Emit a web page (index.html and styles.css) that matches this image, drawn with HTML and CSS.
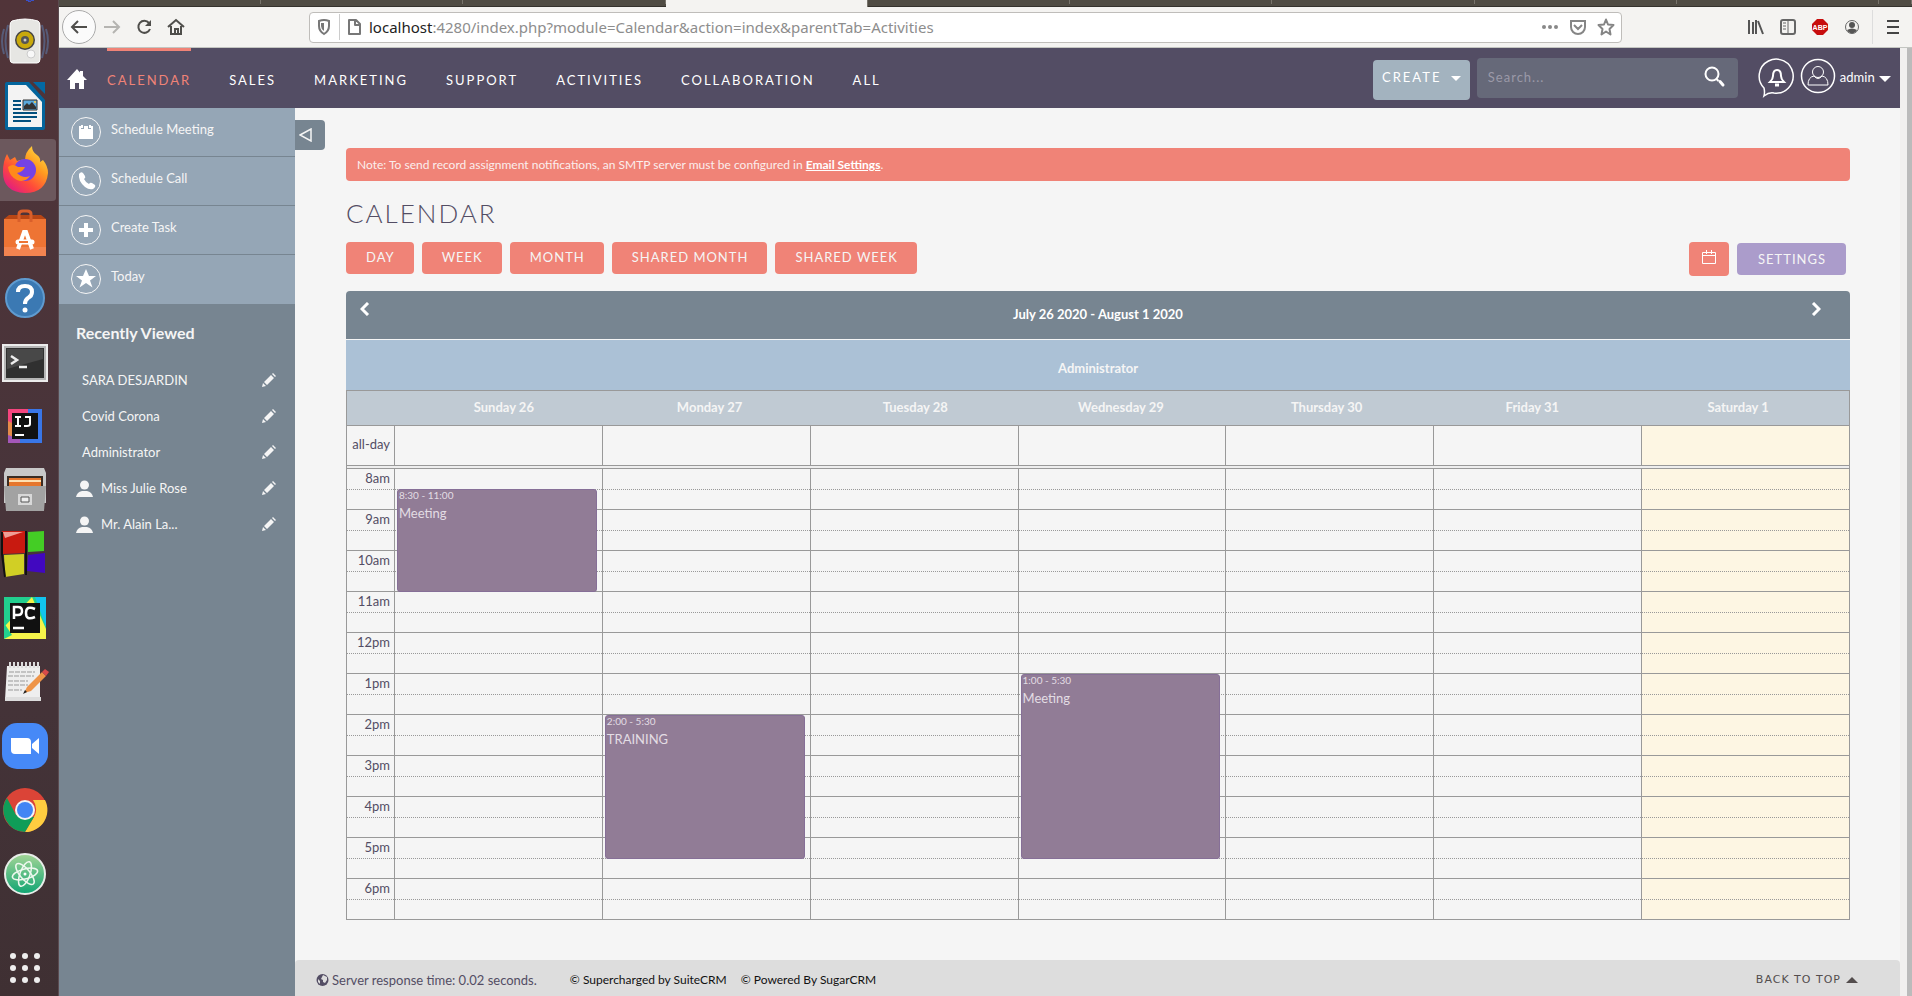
FILE: index.html
```html
<!DOCTYPE html>
<html lang="en">
<head>
<meta charset="utf-8">
<title>Calendar</title>
<link rel="stylesheet" href="styles.css">
</head>
<body>
<div class="desktop">
  <nav class="dock" aria-label="Launcher">
    <svg class="dock-peek" width="8" height="2" viewBox="0 0 8 2"><path d="M0 0h3l1 1 1-1h3v1H5v1H2V1H0z" fill="#3a50c8"/></svg>
    <button class="dock-item" aria-label="Sound"><svg width="50" height="50" viewBox="0 0 50 50"><g fill="none" stroke="#5a6c93" stroke-width="2" opacity=".7"><path d="M8 8q-5 16 0 33M4 12q-4 12 0 25M42 8q5 16 0 33M46 12q4 12 0 25"/></g><path d="M12 4q13-4 26 0 2 1 2 5v33q0 4-3 4H13q-3 0-3-4V9q0-4 2-5z" fill="#e6e6e3" stroke="#fff"/><circle cx="25" cy="23" r="10" fill="#444"/><circle cx="25" cy="23" r="8.500" fill="#c9a90c"/><circle cx="25" cy="23" r="4" fill="#555"/><circle cx="25" cy="23" r="1.500" fill="#ccc"/><circle cx="31" cy="37" r="4" fill="#f8f8f8" stroke="#ccc"/></svg></button>
    <button class="dock-item" aria-label="Writer"><svg width="50" height="50" viewBox="0 0 50 50"><path d="M7 1h22l16 18v28q0 2-2 2H7q-2 0-2-2V3q0-2 2-2z" fill="#03659d"/><path d="M33 1h12v12z" fill="#0369a3"/><path d="M8 4h18l16 17v25H8z" fill="#f3f3f3"/><g stroke="#03507e" stroke-width="2"><path d="M13 20h8M13 24h8M13 28h8M13 32h24M13 36h24M13 40h18"/></g><path d="M23 19h14v10H23z" fill="#5aa9dc" stroke="#333"/><path d="M24 28v-3l3-3 2 2 3-3 4 5v2z" fill="#333"/><circle cx="35" cy="21" r="1" fill="#fc4"/></svg></button>
    <button class="dock-item is-active" aria-label="Firefox"><svg width="50" height="50" viewBox="0 0 50 50"><defs><linearGradient id="fx" x1="1" y1="0" x2=".2" y2="1"><stop offset="0" stop-color="#fff44f"/><stop offset=".4" stop-color="#ff9a1f"/><stop offset=".7" stop-color="#ff4a3a"/><stop offset="1" stop-color="#e01a86"/></linearGradient></defs><path d="M7 9l3 6 5-3 2 4q5-2 8-1 0-8 7-14 0 6 5 9 4 3 3 7l3-2q5 6 5 13Q46 48 25 48 3 47 3 27q0-11 4-18z" fill="url(#fx)"/><circle cx="25" cy="25" r="11" fill="#7542e5"/><path d="M8 22q5-4 10 0l7 0q-2 5-8 6 6 6 13 3-5 7-13 4-8-4-9-13z" fill="#ff8a1a"/></svg></button>
    <button class="dock-item" aria-label="Software"><svg width="50" height="50" viewBox="0 0 50 50"><path d="M4 10h42v37H4z" fill="#ee7434"/><path d="M4 10l5-4h32l5 4z" fill="#b94615"/><path d="M4 38h42v9H4z" fill="#f38450"/><path d="M19 13V5q0-3 4-3h4q4 0 4 3v8" fill="none" stroke="#d95f2b" stroke-width="3"/><path d="M18 40l6-17h2l6 17" fill="none" stroke="#fff" stroke-width="4"/><path d="M18 33h14" stroke="#fff" stroke-width="5" stroke-linecap="round"/><path d="M19 33h9" stroke="#ee7434" stroke-width="2"/></svg></button>
    <button class="dock-item" aria-label="Help"><svg width="50" height="50" viewBox="0 0 50 50"><circle cx="25" cy="25" r="19" fill="#3b79b3" stroke="#5f9bd0" stroke-width="2"/><path d="M18 19q0-6 7-6t7 6q0 4-4 6-3 2-3 6" fill="none" stroke="#fff" stroke-width="4"/><circle cx="25" cy="37" r="2.500" fill="#fff"/></svg></button>
    <button class="dock-item" aria-label="Terminal"><svg width="50" height="50" viewBox="0 0 50 50"><path d="M3 8h44v36H3z" fill="#b5b5b5" stroke="#ececec" stroke-width="2"/><path d="M6 11h38v30H6z" fill="#303030"/><path d="M7 12h36v10L7 32z" fill="#484848"/><path d="M11 19l6 4-6 4M19 30h8" fill="none" stroke="#eee" stroke-width="2.500"/></svg></button>
    <button class="dock-item" aria-label="IntelliJ IDEA"><svg width="50" height="50" viewBox="0 0 50 50"><path d="M8 8h34v34H8z" fill="#3976e8"/><path d="M8 8h20v24H8z" fill="#f4457e"/><path d="M8 20l8 4v18H8z" fill="#e58a4a"/><path d="M8 34l12 4v4H8z" fill="#a457b8"/><path d="M12 12h26v26H12z" fill="#111"/><path d="M15 16h6M18 16v9M15 25h6M25 16h5v7q0 2-3 2h-3M15 34h9" fill="none" stroke="#fff" stroke-width="2"/></svg></button>
    <button class="dock-item" aria-label="Files"><svg width="50" height="50" viewBox="0 0 50 50"><path d="M6 3h38l2 5v30H4V8z" fill="#c8c8c8"/><path d="M7 11h36v10H7z" fill="#3a2c23"/><path d="M9 13h32v8H9z" fill="#e6762c"/><path d="M9 16h32" stroke="#ffe0b0" stroke-width="2"/><path d="M4 21h42l-2 25H6z" fill="#a2a2a2"/><path d="M18 29h14v11H18z" fill="#d8d8d8"/><path d="M21 32h8v5h-8z" fill="#eee" stroke="#555"/></svg></button>
    <button class="dock-item" aria-label="Cubes"><svg width="50" height="50" viewBox="0 0 50 50"><path d="M2 2h23v22l-22 1z" fill="#c81a10"/><path d="M3 3h20L5 9z" fill="#ef9d95"/><path d="M28 3l16-1v20l-16 1z" fill="#44cd25"/><path d="M4 26l20-1v20L5 48z" fill="#d1cf25"/><path d="M28 26l17-2v20l-18-2z" fill="#4108c0"/><path d="M2 3v22l3 23M26 2v44" fill="none" stroke="#111" stroke-width="2"/></svg></button>
    <button class="dock-item" aria-label="PyCharm"><svg width="50" height="50" viewBox="0 0 50 50"><path d="M4 4h42v42H4z" fill="#22cf8f"/><path d="M35 4h11v30z" fill="#12c4ee"/><path d="M4 46V34L32 4l14 32v10z" fill="#f5f34a"/><path d="M4 46V30l8 12z" fill="#22cf8f"/><path d="M10 10h30v30H10z" fill="#111"/><path d="M14 26V14h4q4 0 4 4t-4 4h-4M35 16q-9-4-9 4t9 4M13 35h11" fill="none" stroke="#fff" stroke-width="2.500"/></svg></button>
    <button class="dock-item" aria-label="Notes"><svg width="50" height="50" viewBox="0 0 50 50"><path d="M7 9h33v32l1 2H5z" fill="#eee"/><path d="M5 40h36v4H5z" fill="#ddd"/><path d="M9 15h26M8 19h26M8 24h20M8 28h20M8 33h14" stroke="#999" stroke-dasharray="5 1"/><path d="M9 8h30" stroke="#ddd" stroke-width="6" stroke-dasharray="2 2"/><path d="M24 36l3-6 15-15 4 4-15 15z" fill="#ee9448"/><path d="M42 15l3-3 4 3-3 4z" fill="#d94a4a"/><path d="M23 37l2-4 2 2z" fill="#222"/></svg></button>
    <button class="dock-item" aria-label="Zoom"><svg width="50" height="50" viewBox="0 0 50 50"><rect x="2" y="2" width="46" height="46" rx="15" fill="#4689f7"/><path d="M11 17h16q4 0 4 4v12H15q-4 0-4-4zM32 23l7-6v16l-7-6z" fill="#fff"/></svg></button>
    <button class="dock-item" aria-label="Chrome"><svg width="50" height="50" viewBox="0 0 50 50"><circle cx="25" cy="25" r="22" fill="#db4437"/><path d="M45 15a22 22 0 0 1-20 32l10-17q3-8-2-15z" fill="#ffcd40"/><path d="M7 13a22 22 0 0 0 18 34l9-15-18-2z" fill="#0f9d58"/><circle cx="25" cy="25" r="10" fill="#f4f4f4"/><circle cx="25" cy="25" r="8" fill="#4285f4"/></svg></button>
    <button class="dock-item" aria-label="Atom"><svg width="50" height="50" viewBox="0 0 50 50"><defs><linearGradient id="at" x1="0" y1="0" x2="0" y2="1"><stop offset="0" stop-color="#a3d596"/><stop offset="1" stop-color="#10a573"/></linearGradient></defs><circle cx="25" cy="25" r="20" fill="url(#at)" stroke="#e8ede9" stroke-width="2"/><g fill="none" stroke="#eef8ef" stroke-width="1.500"><ellipse cx="25" cy="25" rx="13" ry="5" transform="rotate(-15 25 25)"/><ellipse cx="25" cy="25" rx="13" ry="5" transform="rotate(50 25 25)"/><ellipse cx="25" cy="25" rx="13" ry="5" transform="rotate(110 25 25)"/></g><circle cx="25" cy="25" r="1.500" fill="#fff"/></svg></button>
    <button class="dock-item dock-apps" aria-label="Show applications"><svg width="50" height="50" viewBox="0 0 50 50" fill="#eee"><circle cx="13" cy="13" r="3"/><circle cx="25" cy="13" r="3"/><circle cx="37" cy="13" r="3"/><circle cx="13" cy="25" r="3"/><circle cx="25" cy="25" r="3"/><circle cx="37" cy="25" r="3"/><circle cx="13" cy="37" r="3"/><circle cx="25" cy="37" r="3"/><circle cx="37" cy="37" r="3"/></svg></button>
  </nav>

  <div class="browser">
    <div class="tabs"><i></i><i></i><i></i><i class="tab-active"></i><i></i><i></i><i></i><i></i><i></i><i></i></div>
    <div class="toolbar">
      <button class="tool-back" aria-label="Back"><svg width="18" height="18" viewBox="0 0 18 18" fill="none" stroke="#4f4e4b" stroke-width="2"><path d="M17 9H2M8 3L2 9l6 6"/></svg></button>
      <button class="tool" aria-label="Forward"><svg width="18" height="18" viewBox="0 0 18 18" fill="none" stroke="#b5b4b1" stroke-width="2"><path d="M1 9h15M10 3l6 6-6 6"/></svg></button>
      <button class="tool" aria-label="Reload"><svg width="18" height="18" viewBox="0 0 18 18"><path d="M14 5a6 6 0 1 0 1 6" fill="none" stroke="#4f4e4b" stroke-width="2"/><path d="M16 2v6h-6z" fill="#4f4e4b"/></svg></button>
      <button class="tool" aria-label="Home"><svg width="18" height="18" viewBox="0 0 18 18" fill="none" stroke="#4f4e4b" stroke-width="2"><path d="M1 9l8-7 8 7M4 8v8h10V8"/><path d="M8 16v-5h3v5"/></svg></button>
      <div class="url">
        <svg width="16" height="18" viewBox="0 0 16 18"><path d="M3 3q5-2 10 0v5q0 5-5 8-5-3-5-8z" fill="none" stroke="#777" stroke-width="2"/><path d="M8 5v8q-3-2-3-5V5z" fill="#777"/></svg>
        <span class="url-line"></span>
        <svg width="14" height="18" viewBox="0 0 14 18"><path d="M2 2h7l4 4v10H2zM8 2v5h5" fill="none" stroke="#777" stroke-width="2" stroke-linejoin="round"/></svg>
        <span class="url-text"><b>localhost</b>:4280/index.php?module=Calendar&amp;action=index&amp;parentTab=Activities</span>
        <span class="url-icons">
          <svg width="18" height="18" viewBox="0 0 18 18" fill="#888"><circle cx="3" cy="9" r="2"/><circle cx="9" cy="9" r="2"/><circle cx="15" cy="9" r="2"/></svg>
          <svg width="18" height="18" viewBox="0 0 18 18" fill="none" stroke="#858585" stroke-width="2"><path d="M2 3h14v6a7 7 0 0 1-14 0zM5 7l4 4 4-4"/></svg>
          <svg width="18" height="18" viewBox="0 0 18 18" fill="none" stroke="#858585" stroke-width="2"><path d="M9 1.500l2 5 5.500.5-4 4 1 5.500L9 13.500 4.500 16.500l1-5.500-4-4L7 6.500z" stroke-linejoin="round"/></svg>
        </span>
      </div>
      <div class="tools-right">
        <svg width="16" height="18" viewBox="0 0 16 18" stroke="#555" stroke-width="2"><path d="M1 2v14M5 4v12M8 2v14M10 3l5 13"/></svg>
        <svg width="16" height="18" viewBox="0 0 16 18" fill="none" stroke="#666"><rect x="1" y="2" width="14" height="14" rx="2" stroke-width="2"/><path d="M8 2v14M3 5h3M3 8h3M3 11h3"/></svg>
        <svg width="16" height="18" viewBox="0 0 16 18"><path d="M5 1h6l5 5v6l-5 5H5l-5-5V6z" fill="#c70d0d"/><text x="8" y="12" class="abp">ABP</text></svg>
        <svg width="16" height="18" viewBox="0 0 16 18"><circle cx="8" cy="9" r="6.500" fill="none" stroke="#666"/><circle cx="8" cy="7" r="3" fill="#555"/><path d="M3 12q5-3 10 0-2 4-5 3-3 1-5-3z" fill="#555"/></svg>
        <span class="tool-line"></span>
        <svg width="14" height="18" viewBox="0 0 14 18" stroke="#444" stroke-width="2"><path d="M1 3h12M1 9h12M1 15h12"/></svg>
      </div>
    </div>

    <div class="viewport">
      <div class="page">
        <header class="topbar">
          <a class="home" href="#" aria-label="Home"><svg width="20" height="20" viewBox="0 0 20 20" fill="#fff"><path d="M10 0l3 3.500V2h3v5l4 4h-3v9h-5v-6H8v6H3v-9H0z"/></svg></a>
          <nav class="menu"><a class="current" href="#">CALENDAR</a><a href="#">SALES</a><a href="#">MARKETING</a><a href="#">SUPPORT</a><a href="#">ACTIVITIES</a><a href="#">COLLABORATION</a><a href="#">ALL</a></nav>
          <button class="create">CREATE <span class="caret"></span></button>
          <form class="search"><input type="text" placeholder="Search..." aria-label="Search"><button type="button" aria-label="Run search"><svg width="22" height="22" viewBox="0 0 22 22" fill="none" stroke="#fff"><circle cx="8" cy="8" r="6.500" stroke-width="2"/><path d="M12.500 13l2 2" stroke-width="2"/><path d="M16 15.500l3 3.500" stroke-width="3" stroke-linecap="round"/></svg></button></form>
          <button class="round" aria-label="Alerts"><svg width="38" height="42" viewBox="0 0 38 42" fill="none" stroke="#fff" stroke-width="2"><path d="M6 31a17 17 0 1 1 10 5q-5-1-10 3 1-4 0-8z" stroke-width="1.500"/><path d="M12 25q3-3 3-6 0-6 4-6t4 6q0 3 3 6z"/><path d="M17 28h4" stroke-width="3"/></svg></button>
          <button class="round" aria-label="Profile"><svg width="36" height="42" viewBox="0 0 36 42" fill="none" stroke="#fff"><circle cx="18" cy="19" r="16.500" stroke-width="1.500"/><circle cx="18" cy="15" r="5.500"/><path d="M8 28q0-8 6-9 4 5 8 0 6 1 6 9z"/></svg></button>
          <button class="user">admin <span class="caret caret-big"></span></button>
        </header>

        <div class="body">
          <aside class="sidebar">
            <ul class="actions">
              <li><a href="#"><svg width="30" height="30" viewBox="0 0 30 30"><circle cx="15" cy="15" r="14.500" fill="none" stroke="#f5f5f5"/><path d="M8 9h2v3h3V9h4v3h3V9h2v13H8z" fill="#fff"/><path d="M10 8h2v3h-2zM18 8h2v3h-2z" fill="#fff"/></svg><span>Schedule Meeting</span></a></li>
              <li><a href="#"><svg width="30" height="30" viewBox="0 0 30 30"><circle cx="15" cy="15" r="14.500" fill="none" stroke="#f5f5f5"/><path d="M8 8q2-3 4-1l2 3q1 2-1 3 2 4 5 5 1-2 3-1l3 2q1 2-2 4-4 1-8-2-7-6-6-13z" fill="#fff"/></svg><span>Schedule Call</span></a></li>
              <li><a href="#"><svg width="30" height="30" viewBox="0 0 30 30"><circle cx="15" cy="15" r="14.500" fill="none" stroke="#f5f5f5"/><path d="M15 8v14M8 15h14" stroke="#fff" stroke-width="4"/></svg><span>Create Task</span></a></li>
              <li><a href="#"><svg width="30" height="30" viewBox="0 0 30 30"><circle cx="15" cy="15" r="14.500" fill="none" stroke="#f5f5f5"/><path d="M15 5l3 7h7l-6 4.500 2.500 7L15 19l-6.500 4.500 2.500-7L5 12h7z" fill="#fff"/></svg><span>Today</span></a></li>
            </ul>
            <h2>Recently Viewed</h2>
            <ul class="recent">
              <li><a href="#">SARA DESJARDIN</a><button aria-label="Edit"><svg width="14" height="14" viewBox="0 0 14 14" fill="#f5f5f5"><path d="M0 14l1-4 3 3zM2 9l7-7 3 3-7 7zM10 1l1-1 3 3-1 1z"/></svg></button></li>
              <li><a href="#">Covid Corona</a><button aria-label="Edit"><svg width="14" height="14" viewBox="0 0 14 14" fill="#f5f5f5"><path d="M0 14l1-4 3 3zM2 9l7-7 3 3-7 7zM10 1l1-1 3 3-1 1z"/></svg></button></li>
              <li><a href="#">Administrator</a><button aria-label="Edit"><svg width="14" height="14" viewBox="0 0 14 14" fill="#f5f5f5"><path d="M0 14l1-4 3 3zM2 9l7-7 3 3-7 7zM10 1l1-1 3 3-1 1z"/></svg></button></li>
              <li class="person"><svg width="17" height="17" viewBox="0 0 17 17" fill="#f5f5f5"><circle cx="8.500" cy="5" r="4.500"/><path d="M0 17q1-5 6-6h5q5 1 6 6z"/></svg><a href="#">Miss Julie Rose</a><button aria-label="Edit"><svg width="14" height="14" viewBox="0 0 14 14" fill="#f5f5f5"><path d="M0 14l1-4 3 3zM2 9l7-7 3 3-7 7zM10 1l1-1 3 3-1 1z"/></svg></button></li>
              <li class="person"><svg width="17" height="17" viewBox="0 0 17 17" fill="#f5f5f5"><circle cx="8.500" cy="5" r="4.500"/><path d="M0 17q1-5 6-6h5q5 1 6 6z"/></svg><a href="#">Mr. Alain La...</a><button aria-label="Edit"><svg width="14" height="14" viewBox="0 0 14 14" fill="#f5f5f5"><path d="M0 14l1-4 3 3zM2 9l7-7 3 3-7 7zM10 1l1-1 3 3-1 1z"/></svg></button></li>
            </ul>
          </aside>

          <div class="main">
            <button class="collapse" aria-label="Collapse sidebar"><svg width="14" height="14" viewBox="0 0 14 14" fill="none" stroke="#f5f5f5" stroke-width="1.500"><path d="M1 7l11-6v12z"/></svg></button>
            <main class="content">
              <p class="alert">Note: To send record assignment notifications, an SMTP server must be configured in <a href="#">Email Settings</a>.</p>
              <h1>CALENDAR</h1>
              <div class="controls">
                <button>DAY</button><button>WEEK</button><button>MONTH</button><button>SHARED MONTH</button><button>SHARED WEEK</button>
                <button class="pick" aria-label="Pick date"><svg width="16" height="16" viewBox="0 0 16 16" fill="none" stroke="#fff"><path d="M1.500 3.500h13v11h-13zM1.500 6.500h13M5.500 1v4M10.500 1v4"/></svg></button>
                <button class="settings">SETTINGS</button>
              </div>
              <section class="calendar">
                <div class="cal-nav">
                  <button class="prev" aria-label="Previous week"><svg width="10" height="14" viewBox="0 0 10 14" fill="none" stroke="#fff" stroke-width="3"><path d="M8 1L2 7l6 6"/></svg></button>
                  <span>July 26 2020 - August 1 2020</span>
                  <button class="next" aria-label="Next week"><svg width="10" height="14" viewBox="0 0 10 14" fill="none" stroke="#fff" stroke-width="3"><path d="M2 1l6 6-6 6"/></svg></button>
                </div>
                <div class="cal-user">Administrator</div>
                <table class="days">
                  <colgroup><col class="col-lead"><col><col><col><col><col><col><col><col class="col-trail"></colgroup>
                  <tr><td></td><th>Sunday 26</th><th>Monday 27</th><th>Tuesday 28</th><th>Wednesday 29</th><th>Thursday 30</th><th>Friday 31</th><th>Saturday 1</th><td></td></tr>
                </table>
                <table class="grid allday">
                  <colgroup><col class="col-axis"><col><col><col><col><col><col><col></colgroup>
                  <tr><th>all-day</th><td></td><td></td><td></td><td></td><td></td><td></td><td></td></tr>
                </table>
                <div class="split"></div>
                <table class="grid hours">
                  <colgroup><col class="col-axis"><col><col><col><col><col><col><col></colgroup>
                  <tr><th>8am</th><td><div class="event from-half" style="--halves:5"><small>8:30 - 11:00</small>Meeting</div></td><td></td><td></td><td></td><td></td><td></td><td></td></tr>
                  <tr><th>9am</th><td></td><td></td><td></td><td></td><td></td><td></td><td></td></tr>
                  <tr><th>10am</th><td></td><td></td><td></td><td></td><td></td><td></td><td></td></tr>
                  <tr><th>11am</th><td></td><td></td><td></td><td></td><td></td><td></td><td></td></tr>
                  <tr><th>12pm</th><td></td><td></td><td></td><td></td><td></td><td></td><td></td></tr>
                  <tr><th>1pm</th><td></td><td></td><td></td><td><div class="event" style="--halves:9"><small>1:00 - 5:30</small>Meeting</div></td><td></td><td></td><td></td></tr>
                  <tr><th>2pm</th><td></td><td><div class="event" style="--halves:7"><small>2:00 - 5:30</small>TRAINING</div></td><td></td><td></td><td></td><td></td><td></td></tr>
                  <tr><th>3pm</th><td></td><td></td><td></td><td></td><td></td><td></td><td></td></tr>
                  <tr><th>4pm</th><td></td><td></td><td></td><td></td><td></td><td></td><td></td></tr>
                  <tr><th>5pm</th><td></td><td></td><td></td><td></td><td></td><td></td><td></td></tr>
                  <tr><th>6pm</th><td></td><td></td><td></td><td></td><td></td><td></td><td></td></tr>
                </table>
              </section>
            </main>
            <footer class="footer">
              <svg width="13" height="14" viewBox="0 0 13 14"><circle cx="6.500" cy="7" r="6" fill="#534d64"/><path d="M7 2l4 2v3l-2 3-2-1V7L5 6zM2 6l2 2v3L2 9z" fill="#ddd"/></svg>
              <span class="timing">Server response time: 0.02 seconds.</span>
              <a href="#">© Supercharged by SuiteCRM</a>
              <a href="#">© Powered By SugarCRM</a>
              <a class="to-top" href="#">BACK TO TOP <svg width="12" height="6" viewBox="0 0 12 6"><path d="M0 6l6-6 6 6z" fill="#534d4d"/></svg></a>
            </footer>
          </div>
        </div>
      </div>
      <div class="scroll"></div>
    </div>
  </div>
</div>
</body>
</html>
```
FILE: styles.css
```css
* { box-sizing: border-box; }
body {
  margin: 0;
  background: #f5f5f5;
  color: #534d64;
  font: 13px/20px Lato, sans-serif;
}
button, input { font: inherit; color: inherit; letter-spacing: inherit; border: 0; padding: 0; background: none; }
a { color: inherit; text-decoration: none; }
ul { list-style: none; margin: 0; padding: 0; }
svg { display: block; flex: none; }

.desktop { display: flex; min-height: 100vh; }

/* Launcher */
.dock {
  flex: none;
  width: 59px;
  display: flex;
  flex-direction: column;
  background: linear-gradient(#513439, #46343a 60%, #3f3033);
  border-right: 1px solid #5b4b50;
}
.dock-peek { margin-left: 26px; margin-bottom: 8px; }
.dock-item {
  height: 64px;
  width: 56px;
  display: flex;
  align-items: center;
  border-radius: 0 4px 4px 0;
}
.dock-item.is-active { background: #6c585d; background-clip: content-box; padding: 1px 0; }
.dock-apps { margin-top: auto; margin-bottom: -3px; }

/* Browser frame */
.browser { flex: 1; min-width: 0; display: flex; flex-direction: column; }
.tabs {
  height: 7px;
  display: grid;
  grid-template-columns: repeat(9, 203fr) 33fr;
  background: #504c44;
  border-bottom: 1px solid #35322d;
}
.tabs i { border-right: 1px solid #78746c; height: 4px; }
.tabs .tab-active { background: #f4f3f1; height: 7px; }
.toolbar {
  height: 41px;
  display: flex;
  align-items: center;
  gap: 14px;
  padding: 0 12px 0 3px;
  background: #f4f3f1;
  border-bottom: 1px solid #c3c5c1;
}
.tool-back {
  width: 34px;
  height: 34px;
  display: grid;
  place-items: center;
  border: 1px solid #aaa;
  border-radius: 50%;
  background: #fbfbfb;
  margin-right: -7px;
}
.url {
  flex: 1;
  min-width: 0;
  height: 31px;
  margin-left: 110px;
  margin-right: 112px;
  display: flex;
  align-items: center;
  gap: 7px;
  padding: 0 6px;
  background: #fff;
  border: 1px solid #bfbdba;
  border-radius: 4px;
  color: #8d8d8d;
  font: 15px/20px "Noto Sans", sans-serif;
}
.url-line { width: 1px; height: 26px; background: #ccc; }
.url-text { flex: 1; white-space: nowrap; overflow: hidden; padding-left: 1px; }
.url-text b { font-weight: 400; color: #222; }
.url-icons { display: flex; gap: 10px; }
.tools-right { display: flex; align-items: center; gap: 16px; }
.tool-line { width: 1px; height: 34px; background: #ddd; margin: 0 -3px 0 -4px; }
.abp { font: bold 7px "Liberation Sans", sans-serif; fill: #fff; text-anchor: middle; }

.viewport { flex: 1; display: flex; }
.page { flex: 1; min-width: 0; display: flex; flex-direction: column; }
.scroll { width: 12px; background: #f1f0ef; border-right: 5px solid #bbb; }

/* Application header */
.topbar {
  height: 60px;
  display: flex;
  padding: 0 9px 0 8px;
  background: #534d64;
  color: #fff;
}
.home { margin: 21px 20px 0 0; }
.menu { flex: 1; display: flex; gap: 38px; letter-spacing: 2px; line-height: 58px; }
.menu a { border-top: 3px solid transparent; }
.menu .current { color: #f08377; border-color: #f08377; }
.create {
  height: 40px;
  width: 97px;
  margin: 12px 7px 0 0;
  padding-bottom: 6px;
  background: #a3b3bf;
  border-radius: 4px;
  letter-spacing: 2px;
}
.caret {
  display: inline-block;
  border: 5px solid transparent;
  border-top-color: #fff;
  border-bottom: 0;
  margin-left: 4px;
  vertical-align: middle;
}
.caret-big { border-width: 6px 6px 0; margin-left: 1px; }
.search {
  width: 261px;
  height: 40px;
  margin: 10px 20px 0 0;
  padding: 0 12px 2px 11px;
  display: flex;
  align-items: center;
  background: #666979;
  border-radius: 4px;
}
.search input { flex: 1; min-width: 0; outline: 0; letter-spacing: 1px; }
.search input::placeholder { color: #9b99a8; opacity: 1; }
.round { height: 42px; margin: 9px 4px 0 0; }
.user { height: 40px; margin: 9px 0 0; }

/* Sidebar */
.body { flex: 1; display: flex; }
.sidebar { flex: none; width: 236px; background: #778591; color: #f5f5f5; }
.actions a {
  height: 49px;
  display: flex;
  align-items: center;
  gap: 10px;
  padding: 0 12px;
  background: #95a6b6;
  border-bottom: 1px solid #778591;
}
.actions li:last-child a { border-bottom-color: #95a6b6; }
.actions span { padding-bottom: 6px; }
.sidebar h2 { margin: 19px 17px; font-size: 16px; line-height: 20px; }
.recent { padding: 0 19px 0 17px; }
.recent li { height: 36px; display: flex; align-items: center; gap: 8px; }
.recent a { flex: 1; padding-left: 6px; }
.person a { padding-left: 0; }

/* Main column */
.main { flex: 1; min-width: 0; display: flex; flex-direction: column; background: #f5f5f5; }
.collapse {
  width: 30px;
  height: 30px;
  margin-top: 12px;
  padding-left: 4px;
  background: #778591;
  border-radius: 0 4px 4px 0;
}
.content { flex: 1; padding: 0 50px 40px 51px; margin-top: -2px; }
.alert {
  margin: 0;
  padding: 7px 11px 6px;
  background: #f08377;
  border-radius: 4px;
  color: #fbeeed;
  font-size: 12px;
}
.alert a { font-weight: 700; text-decoration: underline; color: #fff; }
h1 { margin: 16px 0 13px; font-size: 26px; line-height: 32px; font-weight: 300; letter-spacing: 2px; }
.controls { display: flex; align-items: flex-start; gap: 8px; margin-bottom: 15px; color: #f5f5f5; letter-spacing: 1px; }
.controls button {
  height: 32px;
  padding: 0 19px 3px 20px;
  background: #f08377;
  border-radius: 4px;
  white-space: nowrap;
}
.controls .pick { margin-left: auto; height: 34px; padding: 0 12px 4px; }
.controls .settings { margin: 1px 4px 0 0; padding: 0 20px 1px 21px; background: #ab9ccb; }

/* Week view */
.cal-nav {
  height: 48px;
  display: flex;
  justify-content: space-between;
  padding: 11px 0;
  background: #778591;
  border-radius: 4px 4px 0 0;
  color: #fff;
  font-weight: 700;
}
.cal-nav button { width: 42px; height: 14px; }
.cal-nav .prev { padding-left: 14px; }
.cal-nav .next { padding-left: 3px; }
.cal-nav span { padding-top: 2px; }
.cal-user {
  margin-top: 1px;
  height: 50px;
  background: #abc1d6;
  color: #f5f5f5;
  font-weight: 700;
  line-height: 56px;
  text-align: center;
}
table { width: 100%; table-layout: fixed; border-collapse: separate; border-spacing: 0; }
td, th { padding: 0; }
.days { background: #c0cad3; border: 1px solid #999; border-bottom: 0; color: #f5f5f5; }
.days tr { height: 34px; }
.days th { padding-bottom: 2px; }
.col-lead { width: 54px; }
.col-trail { width: 8px; }
.col-axis { width: 48px; }
.grid { border-right: 1px solid #999; }
.grid th, .grid td {
  border-top: 1px solid #999;
  border-left: 1px solid #999;
  vertical-align: top;
}
.grid th { font-weight: 400; line-height: 18px; text-align: right; padding-right: 4px; }
.grid td { position: relative; }
.grid td:last-child { background-color: #fdf6e3; }
.allday tr { height: 40px; }
.grid.allday th { vertical-align: middle; padding-bottom: 4px; }
.split { height: 3px; background: #eee; border: 1px solid #999; border-bottom: 0; }
.hours { border-bottom: 1px solid #999; }
.hours tr { height: 41px; }
.hours th, .hours td {
  background-image: repeating-linear-gradient(90deg, #999 0 1px, transparent 1px 2px);
  background-size: 100% 1px;
  background-position: 0 20px;
  background-repeat: no-repeat;
}
.event {
  position: absolute;
  z-index: 1;
  top: 0;
  left: 2px;
  right: 5px;
  height: calc(var(--halves) * 41px / 2);
  padding: 0 1px;
  background: #917c96;
  border: 1px solid #866f97;
  border-radius: 3px;
  color: #e3dde4;
  line-height: 24px;
}
.from-half { top: 20px; }
.event small { display: block; font-size: 10px; line-height: 11px; }

.footer {
  height: 37px;
  display: flex;
  align-items: center;
  padding: 2px 42px 0 21px;
  background: #ddd;
  border-radius: 4px 4px 0 0;
  font-size: 12px;
  color: #111;
}
.footer .timing { font-size: 13px; color: #534d64; margin: 0 33px 0 3px; }
.footer a { margin-right: 14px; }
.footer .to-top {
  margin: 0 0 0 auto;
  display: flex;
  align-items: center;
  gap: 5px;
  color: #534d4d;
  font-family: "DejaVu Sans", sans-serif;
  font-size: 11px;
  letter-spacing: 1px;
}
```
